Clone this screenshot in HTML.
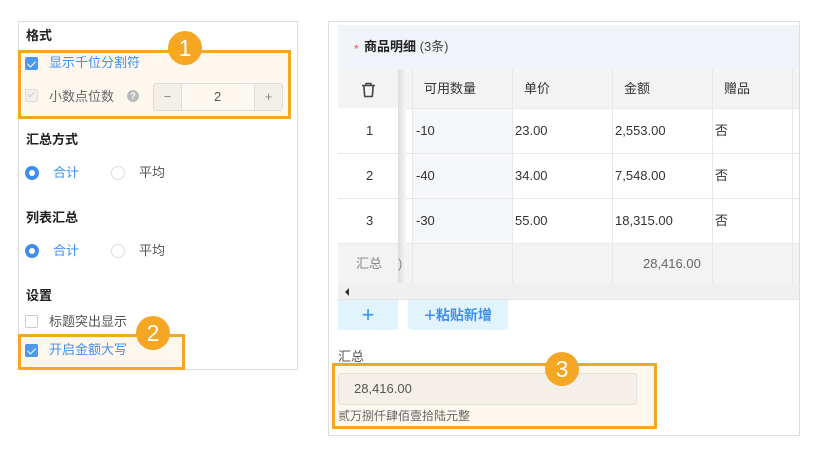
<!DOCTYPE html>
<html><head><meta charset="utf-8">
<style>
*{box-sizing:border-box;margin:0;padding:0}
body{width:819px;height:457px;background:#fff;position:relative;overflow:hidden;font-family:"Liberation Sans","Noto Sans CJK SC",sans-serif;font-size:13px;color:#333;line-height:16px}
.a{position:absolute}
.h{font-weight:bold;font-size:13px;color:#222}
.cb{position:absolute;width:13px;height:13px;border:1px solid #ccc;border-radius:2px;background:#fff}
.cb.on{background:#4a98f0;border-color:#4a98f0}
.cb.on::after{content:"";position:absolute;left:3px;top:1px;width:4px;height:7px;border:solid #fff;border-width:0 1.5px 1.5px 0;transform:rotate(45deg)}
.rd{position:absolute;width:14px;height:14px;border:1px solid #ddd;border-radius:50%;background:#fff}
.rd.on{border:4px solid #3d8ff0}
.blue{color:#3d8ff0}
.circ{position:absolute;width:34px;height:34px;border-radius:50%;background:#f5a623;color:#fff;font-size:23px;text-align:center;line-height:34px}
.obox{position:absolute;border:3px solid #f5a623;background:#fef7ee}
.cell{position:absolute;font-size:13px;color:#333;line-height:16px}
.vl{position:absolute;width:1px;background:#e8e8e8}
.hl{position:absolute;height:1px;background:#e8e8e8}
</style></head><body>
<!-- left panel -->
<div class="a" style="left:18px;top:21px;width:280px;height:349px;border:1px solid #ddd"></div>
<div class="a h" style="left:26px;top:28px">格式</div>
<div class="obox" style="left:18px;top:50px;width:273px;height:69px"></div>
<div class="cb on" style="left:25px;top:57px"></div>
<div class="a blue" style="left:49px;top:55px">显示千位分割符</div>
<div class="cb" style="left:25px;top:89px;background:#f3f0eb;border-color:#ddd"></div>
<div class="a" style="left:29px;top:90px;width:4px;height:7px;border:solid #ccc;border-width:0 1.5px 1.5px 0;transform:rotate(45deg)"></div>
<div class="a" style="left:49px;top:89px;color:#666">小数点位数</div>
<div class="a" style="left:127px;top:90px;width:12px;height:12px;border-radius:50%;background:#bbb;color:#fff;font-size:9px;text-align:center;line-height:12px;font-weight:bold">?</div>
<div class="a" style="left:153px;top:83px;width:130px;height:28px;border:1px solid #ddd;border-radius:3px;background:#fdf8f0"></div>
<div class="a" style="left:154px;top:84px;width:28px;height:26px;background:#f3efe9;border-right:1px solid #ddd;text-align:center;line-height:26px;color:#888">−</div>
<div class="a" style="left:254px;top:84px;width:28px;height:26px;background:#f3efe9;border-left:1px solid #ddd;text-align:center;line-height:26px;color:#888">+</div>
<div class="a" style="left:214px;top:89px;color:#555">2</div>
<div class="a h" style="left:26px;top:132px">汇总方式</div>
<div class="rd on" style="left:25px;top:166px"></div>
<div class="a blue" style="left:53px;top:165px">合计</div>
<div class="rd" style="left:111px;top:166px"></div>
<div class="a" style="left:139px;top:165px;color:#555">平均</div>
<div class="a h" style="left:26px;top:210px">列表汇总</div>
<div class="rd on" style="left:25px;top:244px"></div>
<div class="a blue" style="left:53px;top:243px">合计</div>
<div class="rd" style="left:111px;top:244px"></div>
<div class="a" style="left:139px;top:243px;color:#555">平均</div>
<div class="a h" style="left:26px;top:288px">设置</div>
<div class="cb" style="left:25px;top:315px"></div>
<div class="a" style="left:49px;top:314px;color:#555">标题突出显示</div>
<div class="obox" style="left:18px;top:334px;width:167px;height:36px"></div>
<div class="cb on" style="left:25px;top:344px"></div>
<div class="a blue" style="left:49px;top:342px">开启金额大写</div>
<div class="circ" style="left:168px;top:31px">1</div>
<div class="circ" style="left:136px;top:316px">2</div>

<!-- right panel -->
<div class="a" style="left:328px;top:21px;width:472px;height:415px;border:1px solid #ddd"></div>
<div class="a" style="left:338px;top:25px;width:461px;height:44px;background:#f0f3f8"></div>
<div class="a" style="left:354px;top:41px;color:#e55;font-size:12px">*</div>
<div class="a" style="left:364px;top:39px;font-weight:bold;color:#222">商品明细 <span style="font-weight:normal;color:#444">(3条)</span></div>
<!-- table -->
<div class="a" style="left:338px;top:69px;width:461px;height:39px;background:#f3f3f3"></div>
<div class="a" style="left:412px;top:108px;width:100px;height:135px;background:#f4f6fa"></div>
<div class="a" style="left:338px;top:243px;width:461px;height:40px;background:#f3f3f3"></div>
<div class="a" style="left:338px;top:283px;width:461px;height:17px;background:#f0f0f0;border-bottom:1px solid #e5e5e5"></div>
<div class="a" style="left:345px;top:288px;width:0;height:0;border-top:4px solid transparent;border-bottom:4px solid transparent;border-right:4px solid #333"></div>
<div class="hl" style="left:338px;top:108px;width:461px"></div>
<div class="hl" style="left:338px;top:153px;width:461px"></div>
<div class="hl" style="left:338px;top:198px;width:461px"></div>
<div class="hl" style="left:338px;top:243px;width:461px"></div>
<div class="vl" style="left:412px;top:69px;height:214px"></div>
<div class="vl" style="left:512px;top:69px;height:214px"></div>
<div class="vl" style="left:612px;top:69px;height:214px"></div>
<div class="vl" style="left:712px;top:69px;height:214px"></div>
<div class="vl" style="left:792px;top:69px;height:214px"></div>
<div class="a" style="left:398px;top:69px;width:8px;height:214px;background:linear-gradient(to right,#ddd,#f6f6f6)"></div>
<div class="a" style="left:338px;top:108px;width:60px;height:135px;background:#fff"></div>
<div class="hl" style="left:338px;top:153px;width:60px"></div>
<div class="hl" style="left:338px;top:198px;width:60px"></div>
<svg class="a" style="left:361px;top:82px" width="15" height="16" viewBox="0 0 15 16"><path d="M1 3.5h13M5 3.5V1.5h5v2M2.8 3.5l.9 11h7.6l.9-11" fill="none" stroke="#444" stroke-width="1.6" stroke-linejoin="round"/></svg>
<div class="cell" style="left:424px;top:81px">可用数量</div>
<div class="cell" style="left:524px;top:81px">单价</div>
<div class="cell" style="left:624px;top:81px">金额</div>
<div class="cell" style="left:724px;top:81px">赠品</div>
<div class="cell" style="left:366px;top:123px">1</div>
<div class="cell" style="left:366px;top:168px">2</div>
<div class="cell" style="left:366px;top:213px">3</div>
<div class="cell" style="left:416px;top:123px">-10</div>
<div class="cell" style="left:416px;top:168px">-40</div>
<div class="cell" style="left:416px;top:213px">-30</div>
<div class="cell" style="left:515px;top:123px">23.00</div>
<div class="cell" style="left:515px;top:168px">34.00</div>
<div class="cell" style="left:515px;top:213px">55.00</div>
<div class="cell" style="left:615px;top:123px">2,553.00</div>
<div class="cell" style="left:615px;top:168px">7,548.00</div>
<div class="cell" style="left:615px;top:213px">18,315.00</div>
<div class="cell" style="left:715px;top:123px">否</div>
<div class="cell" style="left:715px;top:168px">否</div>
<div class="cell" style="left:715px;top:213px">否</div>
<div class="cell" style="left:356px;top:256px;color:#888">汇总</div>
<div class="cell" style="left:398px;top:256px;color:#888">)</div>
<div class="cell" style="left:643px;top:256px;color:#666">28,416.00</div>
<!-- buttons -->
<div class="a" style="left:338px;top:300px;width:60px;height:30px;background:#e1f3fd;border-radius:0 0 3px 3px;text-align:center;color:#3d8ff0;font-size:22px;line-height:30px">+</div>
<div class="a" style="left:408px;top:300px;width:100px;height:30px;background:#e1f3fd;border-radius:0 0 3px 3px;text-align:center;color:#3d8ff0;font-size:14px;line-height:30px;font-weight:bold"><span style="font-size:20px;font-weight:normal;vertical-align:-2px">+</span>粘贴新增</div>
<div class="a" style="left:338px;top:349px;color:#555">汇总</div>
<div class="obox" style="left:332px;top:363px;width:325px;height:66px"></div>
<div class="a" style="left:338px;top:373px;width:299px;height:32px;background:#f4efe8;border:1px solid #e6e0d8;border-radius:3px"></div>
<div class="a" style="left:354px;top:381px;color:#555">28,416.00</div>
<div class="a" style="left:338px;top:408px;font-size:12px;color:#666">贰万捌仟肆佰壹拾陆元整</div>
<div class="circ" style="left:545px;top:352px">3</div>
</body></html>
